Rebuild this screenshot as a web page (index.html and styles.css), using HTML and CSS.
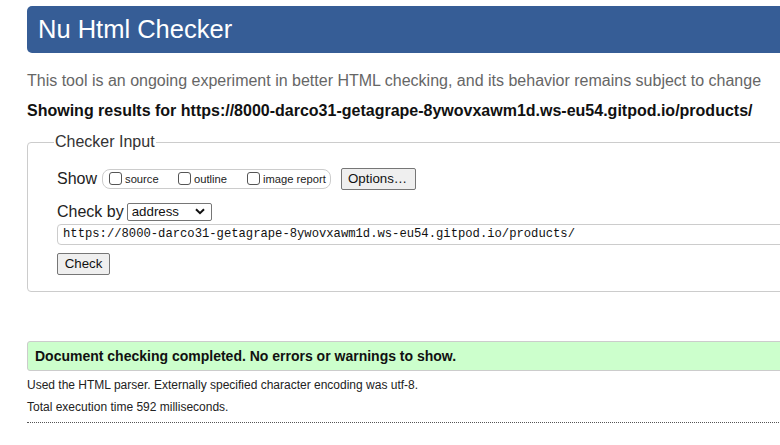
FILE: index.html
```html
<!DOCTYPE html>
<html>
<head>
<meta charset="utf-8">
<link rel="stylesheet" href="styles.css">
</head>
<body>
<div class="page">
  <h1 class="banner">Nu Html Checker</h1>
  <p class="intro">This tool is an ongoing experiment in better HTML checking, and its behavior remains subject to change</p>
  <p class="showing">Showing results for https://8000-darco31-getagrape-8ywovxawm1d.ws-eu54.gitpod.io/products/</p>
  <fieldset class="checker">
    <legend class="checker-legend">Checker Input</legend>
    <div class="row show-row">
      <span class="lbl">Show</span>
      <fieldset class="opts">
        <label class="opt opt-source"><span class="box"></span>source</label>
        <label class="opt opt-outline"><span class="box"></span>outline</label>
        <label class="opt"><span class="box"></span>image report</label>
      </fieldset>
      <span class="btn options">Options…</span>
    </div>
    <div class="row by-row">
      <span class="lbl">Check by</span>
      <span class="select">address<svg class="chev" width="10" height="7" viewBox="0 0 10 7"><path d="M1 1.2 L5 5.2 L9 1.2" fill="none" stroke="#111" stroke-width="2"/></svg></span>
    </div>
    <div class="url">https://8000-darco31-getagrape-8ywovxawm1d.ws-eu54.gitpod.io/products/</div>
    <div class="row"><span class="btn check">Check</span></div>
  </fieldset>
  <p class="success">Document checking completed. No errors or warnings to show.</p>
  <p class="small">Used the HTML parser. Externally specified character encoding was utf-8.</p>
  <p class="small">Total execution time 592 milliseconds.</p>
  <hr class="dots">
</div>
</body>
</html>
```
FILE: styles.css
```css
html, body {
  margin: 0;
  padding: 0;
  overflow: hidden;
  background: #fff;
}
body {
  font-family: "Liberation Sans", Arial, sans-serif;
  color: #222;
}
.page {
  margin-left: 27px;
  width: 1000px;
  padding-top: 6px;
}
.banner {
  margin: 0;
  height: 47px;
  background: #365d96;
  color: #fff;
  border-radius: 5px;
  font-weight: normal;
  font-size: 25.5px;
  line-height: 47px;
  padding-left: 11px;
}
.intro {
  margin: 18px 0 0;
  font-size: 16px;
  line-height: 19px;
  color: #666;
}
.showing {
  margin: 11px 0 0;
  font-size: 16px;
  line-height: 19px;
  font-weight: bold;
  color: #111;
}
.checker {
  margin: 13px 0 0;
  border: 1px solid #ccc;
  border-radius: 4px;
  padding: 17px 29px 16px;
}
.checker-legend {
  font-size: 16px;
  color: #333;
  padding: 0 1px;
  margin-left: -3px;
  line-height: 18px;
}
.row {
  display: flex;
  align-items: center;
}
.lbl {
  font-size: 16px;
  color: #222;
}
.show-row {
  height: 22px;
}
.opts {
  margin: 0 0 0 5px;
  padding: 0 5px 0 6px;
  border: 1px solid #ccc;
  border-radius: 8px;
  height: 18px;
  display: flex;
  align-items: center;
  width: 216px;
  min-width: 0;
  box-sizing: content-box;
  overflow: hidden;
}
.opt {
  display: flex;
  align-items: center;
  font-size: 11.2px;
  color: #222;
  white-space: nowrap;
  flex: none;
}
.opt-source { width: 69px; }
.opt-outline { width: 69px; }
.box {
  width: 13px;
  height: 13px;
  border: 1px solid #555;
  border-radius: 3px;
  margin-right: 3px;
  margin-top: -2px;
  box-sizing: border-box;
  display: inline-block;
}
.btn {
  display: inline-block;
  box-sizing: border-box;
  border: 1px solid #767676;
  border-radius: 2px;
  background: #efefef;
  font-size: 13.3px;
  color: #111;
}
.options {
  margin-left: 10px;
  height: 22px;
  line-height: 20px;
  width: 75px;
  padding-left: 6px;
}
.by-row {
  margin-top: 12px;
  height: 19px;
}
.select {
  margin-left: 3px;
  box-sizing: border-box;
  width: 85px;
  height: 18px;
  border: 1px solid #767676;
  border-radius: 2px;
  font-size: 13.3px;
  line-height: 16px;
  padding-left: 4px;
  display: flex;
  align-items: center;
  justify-content: space-between;
  padding-right: 6px;
  color: #111;
}
.url {
  margin-top: 3px;
  box-sizing: border-box;
  height: 21px;
  border: 1px solid #ccc;
  border-radius: 4px;
  font-family: "Liberation Mono", "DejaVu Sans Mono", monospace;
  font-size: 12.2px;
  line-height: 19px;
  padding-left: 5px;
  color: #111;
}
.check {
  margin-top: 8px;
  height: 22px;
  line-height: 20px;
  width: 53px;
  text-align: center;
}
.success {
  margin: 49px 0 0;
  box-sizing: border-box;
  height: 30px;
  background: #ccffcc;
  border: 1px solid #ccc;
  border-radius: 3px;
  font-weight: bold;
  font-size: 14px;
  line-height: 28px;
  padding-left: 7px;
  color: #111;
}
.small {
  margin: 7px 0 0;
  font-size: 12px;
  line-height: 15px;
  color: #222;
}
.dots {
  margin: 7px 0 0;
  border: 0;
  border-top: 1px dotted #555;
  height: 0;
}
```
